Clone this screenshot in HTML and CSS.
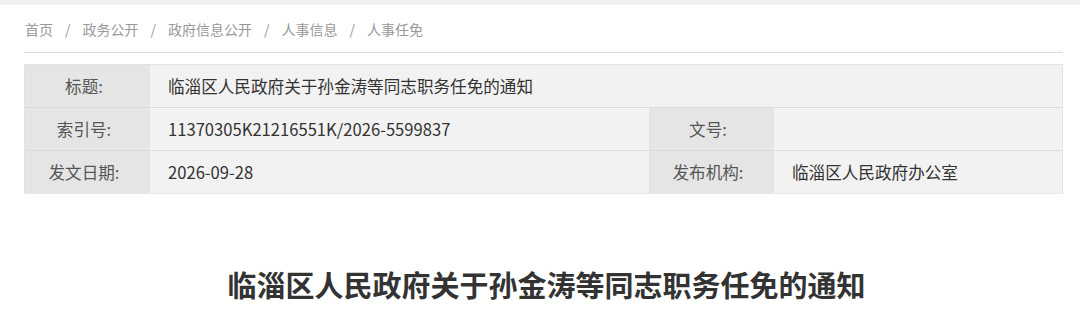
FILE: index.html
```html
<!DOCTYPE html>
<html lang="zh-CN">
<head>
<meta charset="utf-8">
<title>临淄区人民政府关于孙金涛等同志职务任免的通知</title>
<link rel="stylesheet" href="styles.css">
</head>
<body>
<div class="topband"></div>
<div class="page">
  <nav class="crumbs">
    <span>首页</span><span class="sep">/</span>
    <span>政务公开</span><span class="sep">/</span>
    <span>政府信息公开</span><span class="sep">/</span>
    <span>人事信息</span><span class="sep">/</span>
    <span>人事任免</span>
  </nav>
  <div class="meta">
    <div class="lab">标题:</div>
    <div class="val span3">临淄区人民政府关于孙金涛等同志职务任免的通知</div>
    <div class="lab">索引号:</div>
    <div class="val">11370305K21216551K/2026-5599837</div>
    <div class="lab">文号:</div>
    <div class="val"></div>
    <div class="lab last">发文日期:</div>
    <div class="val last">2026-09-28</div>
    <div class="lab last">发布机构:</div>
    <div class="val last">临淄区人民政府办公室</div>
  </div>
  <h1 class="title">临淄区人民政府关于孙金涛等同志职务任免的通知</h1>
</div>
</body>
</html>
```
FILE: styles.css
```css
html, body {
  margin: 0;
  padding: 0;
  background: #fff;
  font-family: "Noto Sans CJK SC", "Noto Sans", sans-serif;
  color: #333;
}
.topband {
  height: 5px;
  background: #efefef;
}
.page {
  width: 1039px;
  margin-left: 24px;
}
.crumbs {
  display: flex;
  align-items: center;
  height: 47px;
  padding-left: 1px;
  font-size: 14px;
  color: #999;
  border-bottom: 1px solid #dedede;
}
.crumbs .sep {
  margin: 0 12px;
}
.meta {
  margin-top: 11px;
  display: grid;
  grid-template-columns: 126px 498px 126px 1fr;
  border: 1px solid #e2e2e2;
  border-bottom: none;
  font-size: 16.6px;
  color: #333;
}
.meta > div {
  height: 42px;
  display: flex;
  align-items: center;
  border-bottom: 1px solid #dadada;
}
.meta > div.last {
  border-bottom: 1px solid #e8e8e8;
}
.lab {
  background: #e5e5e5;
  justify-content: center;
  padding-right: 7px;
  color: #555;
  border-right: 1px solid #f4f4f4;
}
.val {
  background: #f2f2f2;
  padding-left: 17px;
}
.span3 {
  grid-column: span 3;
}
.title {
  margin: 70px 0 0;
  padding-left: 6px;
  text-align: center;
  font-size: 29px;
  font-weight: bold;
  color: #333;
  line-height: 40px;
}
```
